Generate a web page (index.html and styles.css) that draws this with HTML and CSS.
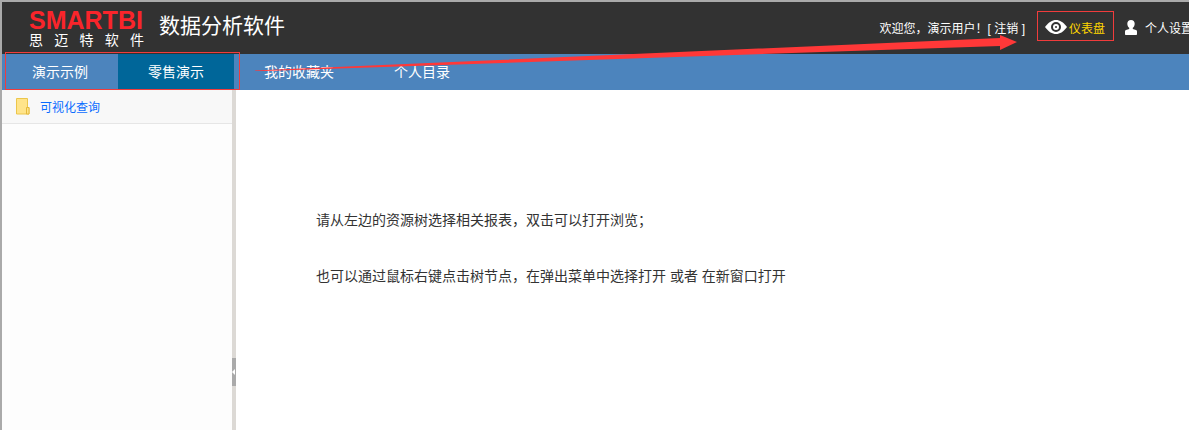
FILE: index.html
```html
<!DOCTYPE html>
<html lang="zh-CN">
<head>
    <meta charset="UTF-8">
    <meta name="viewport" content="width=device-width, initial-scale=1.0">
    <title>数据分析软件</title>
    <link rel="stylesheet" href="styles.css">
</head>
<body>
    <header class="header">
        <div class="logo">
            <div class="logo-name">SMARTBI</div>
            <div class="logo-sub">思 迈 特 软 件</div>
        </div>
        <h1>数据分析软件</h1>
        <div class="user-bar">
            <span class="welcome">欢迎您，演示用户！[ <a href="#">注销</a> ]</span>
            <a href="#" class="dashboard">
                <svg width="22" height="14" viewBox="0 0 22 14">
                    <path d="M0 7C4 2 7 0 11 0s7 2 11 7c-4 5-7 7-11 7S4 12 0 7z" fill="#fff"/>
                    <circle cx="11" cy="7" r="4" fill="#fff" stroke="#323232" stroke-width="2"/>
                    <circle cx="11" cy="7" r="1" fill="#323232"/>
                </svg>
                仪表盘
            </a>
            <a href="#" class="settings">
                <svg width="12" height="15" viewBox="0 0 12 15">
                    <path d="M6 0c2.300 0 3.700 1.600 3.700 3.700C9.700 5.600 8.800 7 7.800 7.800v1.100L11 10c.7.300 1 .8 1 1.500V14c0 .6-.4 1-1 1H1c-.6 0-1-.4-1-1v-2.500c0-.7.3-1.200 1-1.500l3.200-1.100V7.800C3.200 7 2.300 5.600 2.300 3.700 2.300 1.600 3.700 0 6 0z" fill="#fff"/>
                </svg>
                个人设置
            </a>
        </div>
    </header>
    <nav class="tabs">
        <a href="#">演示示例</a>
        <a href="#" class="active">零售演示</a>
        <a href="#">我的收藏夹</a>
        <a href="#">个人目录</a>
    </nav>
    <div class="content">
        <aside class="sidebar">
            <a href="#" class="tree-item">
                <svg width="14" height="17" viewBox="0 0 14 17">
                    <path d="M.5.500h11v9h1.500v6.500H.5z" fill="#ffe48a" stroke="#ecc64b"/>
                    <path d="M10.500 16V9.500H13V16z" fill="#ffe48a" stroke="#e5b93a"/>
                </svg>
                可视化查询
            </a>
        </aside>
        <div class="splitter">
            <button type="button" aria-label="收起">
                <svg width="4" height="6" viewBox="0 0 4 6"><path d="M0 3l3-3v6z" fill="#fff"/></svg>
            </button>
        </div>
        <main>
            <p>请从左边的资源树选择相关报表，双击可以打开浏览；</p>
            <p>也可以通过鼠标右键点击树节点，在弹出菜单中选择打开 或者 在新窗口打开</p>
        </main>
    </div>

    <!-- marks drawn over the page -->
    <div class="mark-box"></div>
    <svg class="mark-arrow" width="762" height="36" viewBox="0 0 762 36">
        <path d="M0 35.500L745 3V0l17 7-17 8v-4L0 36.300z" fill="#ff3838"/>
    </svg>
</body>
</html>
```

FILE: styles.css
```css
* {
    box-sizing: border-box;
}

body {
    display: flex;
    flex-direction: column;
    position: relative;
    min-height: 100vh;
    margin: 0;
    border-top: 2px solid #aaa;
    border-left: 2px solid #aaa;
    background-color: #fff;
    color: #333;
    font-family: "Liberation Sans", "Noto Sans CJK SC", sans-serif;
    font-size: 14px;
    text-spacing-trim: space-all;
    overflow-x: hidden;
}

a {
    color: inherit;
    text-decoration: none;
}

svg {
    display: block;
    flex: none;
}

.header {
    display: flex;
    height: 52px;
    padding-left: 27px;
    background-color: #323232;
    color: #fff;
    overflow: hidden;
    white-space: nowrap;
}

.logo {
    width: 115px;
    padding-top: 7px;
}

.logo-name {
    color: #f9252b;
    font-size: 25px;
    font-weight: bold;
    line-height: 22px;
}

.logo-sub {
    font-size: 14px;
    line-height: 18px;
    text-align-last: justify;
}

h1 {
    margin: 0 0 0 15px;
    font-size: 21px;
    font-weight: normal;
    line-height: 48px;
}

.user-bar {
    display: flex;
    align-items: center;
    height: 30px;
    margin: 9px -4px 0 auto;
    font-size: 12px;
}

.welcome {
    margin-right: 12px;
    padding-top: 2px;
}

.dashboard,
.settings {
    display: flex;
    align-items: center;
}

.dashboard {
    gap: 2px;
    height: 30px;
    padding: 2px 8px 0 7px;
    border: 1px solid #f13c3c;
    color: #ffd500;
}

.settings {
    gap: 8px;
    margin-left: 11px;
    padding-top: 2px;
}

.tabs {
    display: flex;
    height: 36px;
    background-color: #4c84bd;
    color: #fff;
    line-height: 37px;
}

.tabs a {
    height: 35px;
    padding: 0 30px;
}

.tabs .active {
    background-color: #069;
}

.content {
    display: flex;
    flex: 1;
}

.sidebar {
    width: 230px;
    background-color: #fdfdfd;
}

.tree-item {
    display: flex;
    align-items: center;
    gap: 10px;
    height: 34px;
    padding-left: 14px;
    border-bottom: 1px solid #e6e6e6;
    background-color: #f8f8f8;
    color: #0a6cff;
    font-size: 12px;
}

.splitter {
    display: flex;
    align-items: flex-end;
    width: 4px;
    padding-bottom: 44px;
    background-color: #dcd9d5;
}

.splitter button {
    width: 4px;
    height: 28px;
    padding: 0;
    border: none;
    background-color: #aaa;
    cursor: pointer;
}

main {
    flex: 1;
    padding: 116px 80px 0;
}

main p {
    margin: 0 0 28px;
    line-height: 28px;
}

.mark-box {
    position: absolute;
    top: 50px;
    left: 3px;
    width: 235px;
    height: 38px;
    border: 1px solid #f13c3c;
    pointer-events: none;
}

.mark-arrow {
    position: absolute;
    top: 33px;
    left: 253px;
    pointer-events: none;
}
```
